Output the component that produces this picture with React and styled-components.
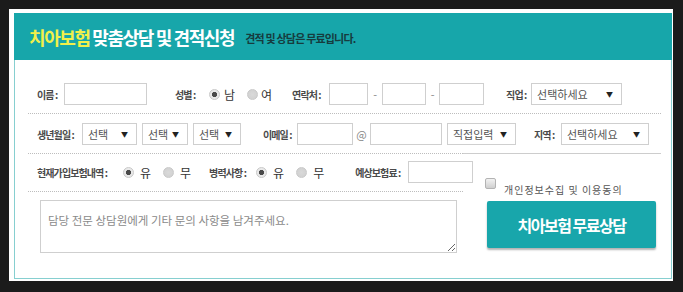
import React from "react";
import styled, { createGlobalStyle } from "styled-components";

const GlobalStyle = createGlobalStyle`
  html, body {
    margin: 0;
    padding: 0;
    background: #1b1b1b;
  }
  body {
    font-family: "Noto Sans CJK KR", "Noto Sans", sans-serif;
  }
`;

const Page = styled.div`
  padding: 9px 0 0 9px;
`;

const Card = styled.div`
  width: 664px;
  height: 272px;
  box-sizing: border-box;
  background: #fff;
  padding: 4px 1px 2px 5px;
`;

const Inner = styled.div`
  height: 100%;
  box-sizing: border-box;
  border: 1px solid #86cfd0;
  border-top: 0;
  display: flex;
  flex-direction: column;
`;

const Header = styled.div`
  height: 47px;
  margin: 0 -1px;
  background: #17a6aa;
  display: flex;
  align-items: center;
  padding: 0 0 0 15px;
  box-sizing: border-box;
`;

const Title = styled.h1`
  margin: 0;
  font-size: 18px;
  font-weight: 700;
  letter-spacing: -1.4px;
  color: #fff;
  white-space: nowrap;
  line-height: 1;
`;

const Accent = styled.span`
  color: #f2f04a;
`;

const Subtitle = styled.span`
  margin-left: 11px;
  font-size: 11px;
  font-weight: 700;
  letter-spacing: -0.8px;
  color: #163c3e;
  white-space: nowrap;
  padding-top: 2px;
`;

const Form = styled.div`
  flex: 1;
  padding: 0 10px 0 13px;
  display: flex;
  flex-direction: column;
`;

const Row = styled.div`
  display: flex;
  align-items: center;
  padding: ${({ $top }) => $top}px 0 8px 9px;
  border-bottom: ${({ $line }) => ($line ? "1px dotted #bdbdbd" : "0")};
`;

const Group = styled.div`
  display: flex;
  align-items: center;
  margin-left: ${({ $ml }) => $ml || 0}px;
  flex-shrink: 0;
`;

const Label = styled.span`
  width: ${({ $w }) => $w}px;
  font-size: 10px;
  font-weight: 700;
  letter-spacing: -0.9px;
  color: #4a4a4a;
  white-space: nowrap;
`;

const TextInput = styled.input`
  width: ${({ $w }) => $w}px;
  height: 22px;
  box-sizing: border-box;
  border: 1px solid #cfcfcf;
  background: #fff;
  padding: 0 4px;
  margin: 0;
  outline: none;
`;

const Dash = styled.span`
  width: ${({ $w }) => $w}px;
  text-align: center;
  font-size: 11px;
  color: #888;
`;

const SelectBox = styled.div`
  width: ${({ $w }) => $w}px;
  height: 22px;
  box-sizing: border-box;
  border: 1px solid #cfcfcf;
  background: #fff;
  margin-left: ${({ $ml }) => $ml || 0}px;
  display: flex;
  align-items: center;
  justify-content: space-between;
  padding: 0 8px 0 5px;
  font-size: 11px;
  color: #555;
  white-space: nowrap;
`;

const Arrow = styled.span`
  font-size: 7px;
  color: #222;
`;

const Radio = styled.span`
  width: 11px;
  height: 11px;
  box-sizing: border-box;
  border-radius: 50%;
  border: 1px solid #c9c9c9;
  background: ${({ $on }) =>
    $on
      ? "radial-gradient(circle, #4a4a4a 0 2.4px, #e9e9e9 2.9px)"
      : "radial-gradient(circle, #d9d9d9 0, #cfcfcf 100%)"};
  margin-left: ${({ $ml }) => $ml || 0}px;
  flex-shrink: 0;
`;

const Choice = styled.span`
  margin-left: ${({ $ml }) => $ml || 4}px;
  font-size: 12px;
  color: #333;
`;

const Bottom = styled.div`
  display: flex;
  flex: 1;
`;

const LeftCol = styled.div`
  width: 435px;
  border-top: 1px dotted #bdbdbd;
`;

const RightCol = styled.div`
  flex: 1;
  border-top: 1px solid #cdcdcd;
  padding: 24px 0 0 22px;
`;

const Memo = styled.textarea`
  display: block;
  margin: 8px 0 0 12px;
  width: 417px;
  height: 53px;
  box-sizing: border-box;
  border: 1px solid #cfcfcf;
  padding: 11px 7px;
  font-family: "Noto Sans CJK KR", sans-serif;
  font-size: 11.5px;
  outline: none;
  &::placeholder {
    color: #8a8a8a;
  }
`;

const Agree = styled.label`
  display: flex;
  align-items: flex-start;
`;

const CheckBox = styled.span`
  width: 11px;
  height: 11px;
  box-sizing: border-box;
  border: 1px solid #b3b3b3;
  border-radius: 2px;
  background: linear-gradient(#f2f2f2, #cfcfcf);
`;

const AgreeText = styled.span`
  margin: 6px 0 0 8px;
  font-size: 10px;
  letter-spacing: 1px;
  color: #555;
  white-space: nowrap;
  line-height: 12px;
`;

const SubmitButton = styled.button`
  margin: 5px 0 0 2px;
  width: 169px;
  height: 47px;
  border: 0;
  border-radius: 2px;
  background: #18a6ab;
  box-shadow: 0 2px 2px rgba(0, 0, 0, 0.3);
  color: #fff;
  font-family: "Noto Sans CJK KR", sans-serif;
  font-size: 16px;
  font-weight: 700;
  letter-spacing: -1.5px;
  cursor: pointer;
`;

const Select = ({ w, ml, children }) => (
  <SelectBox $w={w} $ml={ml}>
    <span>{children}</span>
    <Arrow>▼</Arrow>
  </SelectBox>
);

export default function App() {
  return (
    <Page>
      <GlobalStyle />
      <Card>
        <Inner>
          <Header>
            <Title>
              <Accent>치아보험</Accent> 맞춤상담 및 견적신청
            </Title>
            <Subtitle>견적 및 상담은 무료입니다.</Subtitle>
          </Header>
          <Form>
            <Row $top={23} $line>
              <Group>
                <Label $w={27}>이름 :</Label>
                <TextInput $w={83} />
              </Group>
              <Group $ml={28}>
                <Label $w={34}>성별 :</Label>
                <Radio $on />
                <Choice>남</Choice>
                <Radio $ml={12} />
                <Choice $ml={3}>여</Choice>
              </Group>
              <Group $ml={20}>
                <Label $w={37}>연락처 :</Label>
                <TextInput $w={39} />
                <Dash $w={14}>-</Dash>
                <TextInput $w={44} />
                <Dash $w={13}>-</Dash>
                <TextInput $w={45} />
              </Group>
              <Group $ml={22}>
                <Label $w={25}>직업 :</Label>
                <Select w={91}>선택하세요</Select>
              </Group>
            </Row>
            <Row $top={9}>
              <Group>
                <Label $w={45}>생년월일 :</Label>
                <Select w={55}>선택</Select>
                <Select w={46} ml={5}>선택</Select>
                <Select w={48} ml={5}>선택</Select>
              </Group>
              <Group $ml={22}>
                <Label $w={34}>이메일 :</Label>
                <TextInput $w={56} />
                <Dash $w={17}>@</Dash>
                <TextInput $w={72} />
                <Select w={69} ml={5}>직접입력</Select>
              </Group>
              <Group $ml={18}>
                <Label $w={27}>지역 :</Label>
                <Select w={88}>선택하세요</Select>
              </Group>
            </Row>
            <Bottom>
              <LeftCol>
                <Row $top={7} $line>
                  <Group>
                    <Label $w={86}>현재가입보험내역 :</Label>
                    <Radio $on />
                    <Choice $ml={6}>유</Choice>
                    <Radio $ml={12} />
                    <Choice $ml={6}>무</Choice>
                  </Group>
                  <Group $ml={18}>
                    <Label $w={47}>병력사항 :</Label>
                    <Radio $on />
                    <Choice $ml={6}>유</Choice>
                    <Radio $ml={12} />
                    <Choice $ml={6}>무</Choice>
                  </Group>
                  <Group $ml={31}>
                    <Label $w={53}>예상보험료 :</Label>
                    <TextInput $w={65} />
                  </Group>
                </Row>
                <Memo placeholder="담당 전문 상담원에게 기타 문의 사항을 남겨주세요." />
              </LeftCol>
              <RightCol>
                <Agree>
                  <CheckBox />
                  <AgreeText>개인정보수집 및 이용동의</AgreeText>
                </Agree>
                <SubmitButton>치아보험 무료상담</SubmitButton>
              </RightCol>
            </Bottom>
          </Form>
        </Inner>
      </Card>
    </Page>
  );
}
